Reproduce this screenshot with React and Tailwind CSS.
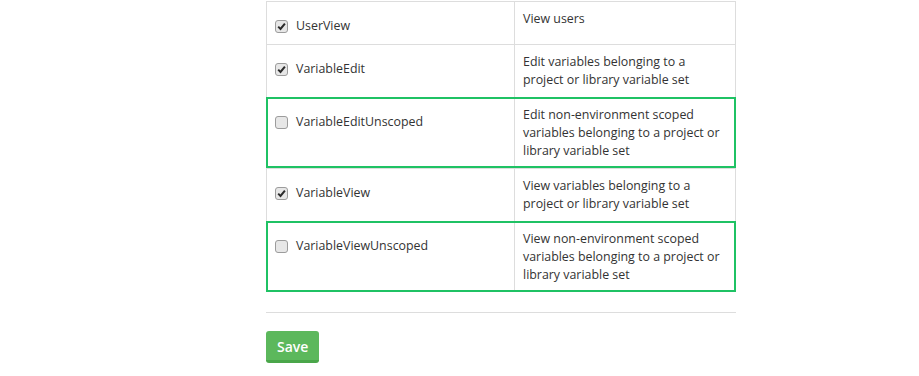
import React from 'react';

const rows = [
  { name: 'UserView', desc: 'View users', checked: true },
  { name: 'VariableEdit', desc: 'Edit variables belonging to a project or library variable set', checked: true },
  {
    name: 'VariableEditUnscoped',
    desc: 'Edit non-environment scoped variables belonging to a project or library variable set',
    checked: false,
    highlight: true,
  },
  { name: 'VariableView', desc: 'View variables belonging to a project or library variable set', checked: true },
  {
    name: 'VariableViewUnscoped',
    desc: 'View non-environment scoped variables belonging to a project or library variable set',
    checked: false,
    highlight: true,
  },
];

const CheckBox = ({ checked }) => (
  <span className="flex items-center justify-center w-[13px] h-[13px] rounded-[3px] border border-[#9c9c9c] bg-[#e7e7e7] flex-shrink-0">
    {checked && (
      <svg width="9" height="9" viewBox="0 0 9 9">
        <path d="M1.2 4.6 L3.5 6.9 L7.9 1.6" fill="none" stroke="#2b2b2b" strokeWidth="2" />
      </svg>
    )}
  </span>
);

export default function App() {
  return (
    <div
      className="w-[919px] h-[376px] bg-white text-[#333] text-[12.4px]"
      style={{ fontFamily: '"Open Sans", "Noto Sans", sans-serif' }}
    >
      <div className="ml-[266px] w-[470px] pt-[1px]">
        {/* Permissions table */}
        <div className="border-x border-[#dddddd]">
          {rows.map((row) => (
            <div
              key={row.name}
              className={`grid border-t border-[#dddddd] ${
                row.highlight
                  ? 'grid-cols-[248px_1fr] outline-2 outline-[#1fc264] -outline-offset-2 -mx-[1px]'
                  : 'grid-cols-[247px_1fr]'
              }`}
            >
              <div className={`flex items-center gap-[8px] pt-[14px] pb-[8px] h-fit leading-[20px] ${row.highlight ? 'pl-[9px]' : 'pl-[8px]'}`}>
                <CheckBox checked={row.checked} />
                <span>{row.name}</span>
              </div>
              <div className="border-l border-[#dddddd] px-[8px] py-[8px] leading-[18px]">{row.desc}</div>
            </div>
          ))}
        </div>

        <div className="mt-[20px] border-t border-[#dddddd]" />

        <button className="mt-[18px] h-[32px] px-[11px] rounded-[3px] bg-[#5cb85c] border-b-[3px] border-[#4aa64a] text-white text-[14px] font-semibold leading-none pt-[2px]">
          Save
        </button>
      </div>
    </div>
  );
}
